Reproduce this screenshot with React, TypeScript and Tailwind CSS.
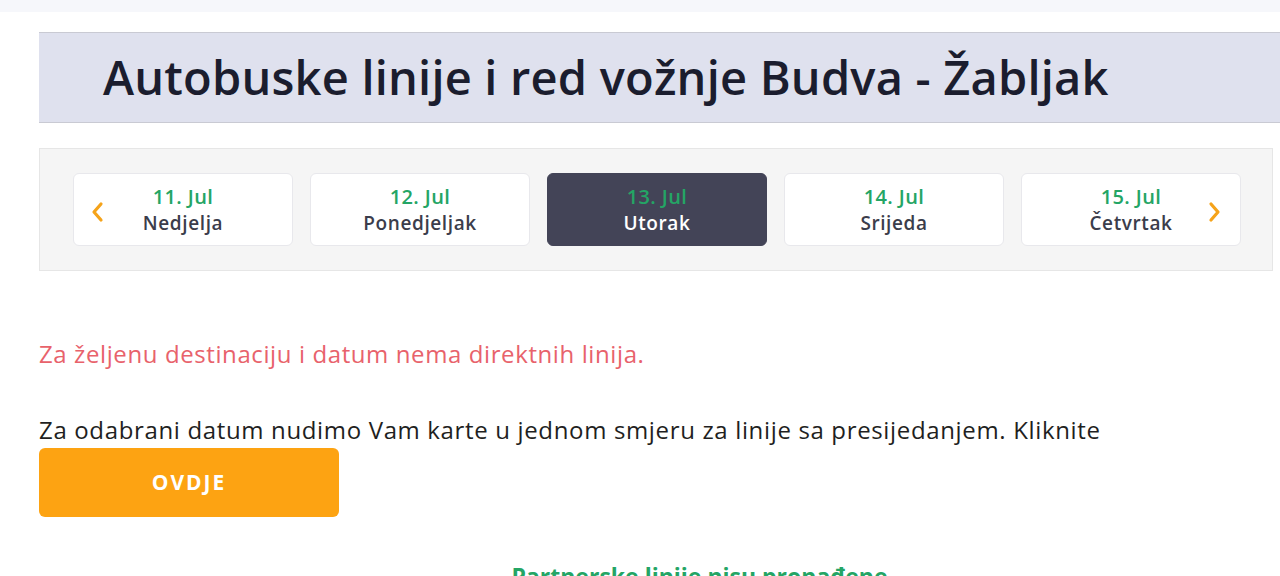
import React from "react";

const days = [
  { date: "11. Jul", name: "Nedjelja", left: true },
  { date: "12. Jul", name: "Ponedjeljak" },
  { date: "13. Jul", name: "Utorak", active: true },
  { date: "14. Jul", name: "Srijeda" },
  { date: "15. Jul", name: "Četvrtak", right: true },
];

function Chevron({ dir }: { dir: "left" | "right" }) {
  return (
    <svg width="14" height="22" viewBox="0 0 14 22" className="shrink-0">
      <path
        d={dir === "left" ? "M11 3 L4 11 L11 19" : "M3 3 L10 11 L3 19"}
        fill="none"
        stroke="#f5a31a"
        strokeWidth="3.2"
        strokeLinecap="round"
        strokeLinejoin="round"
      />
    </svg>
  );
}

export default function App() {
  return (
    <div className="min-h-[576px] w-[1280px] overflow-hidden bg-white" style={{ fontFamily: "'Open Sans', 'Noto Sans', sans-serif" }}>
      <div className="h-[12px] bg-[#f6f7fb]" />
      <div className="w-[1360px] pl-[39px] pt-[20px]">
        <div className="flex h-[91px] items-center border-y border-[#c9cad3] bg-[#dfe1ee] pl-[64px]">
          <h1 className="text-[47px] font-semibold leading-none tracking-[0.2px] text-[#1b1d2e]">
            Autobuske linije i red vožnje Budva - Žabljak
          </h1>
        </div>
        <div className="mt-[25px] flex w-[1234px] gap-[17px] border border-[#e6e6e6] bg-[#f5f5f5] py-[24px] pl-[33px] pr-[29px]">
          {days.map((d) => (
            <div
              key={d.date}
              className={`relative flex h-[73px] w-[220px] flex-col items-center justify-center rounded-[6px] border ${
                d.active ? "border-[#434457] bg-[#434457]" : "border-[#e8e8ec] bg-white"
              }`}
            >
              {d.left && (
                <div className="absolute left-[16px] top-[27px]">
                  <Chevron dir="left" />
                </div>
              )}
              {d.right && (
                <div className="absolute right-[18px] top-[27px]">
                  <Chevron dir="right" />
                </div>
              )}
              <div className="text-[20px] font-semibold leading-[26px] tracking-[0.4px] text-[#24a565]">{d.date}</div>
              <div className={`text-[19px] font-semibold leading-[26px] tracking-[0.6px] ${d.active ? "text-white" : "text-[#3b3d4b]"}`}>
                {d.name}
              </div>
            </div>
          ))}
        </div>
        <p className="mt-[68px] text-[24px] leading-[30px] tracking-[0.6px] text-[#e8626b]">
          Za željenu destinaciju i datum nema direktnih linija.
        </p>
        <p className="mt-[46px] text-[24px] leading-[30px] tracking-[0.65px] text-[#1f1f22]">
          Za odabrani datum nudimo Vam karte u jednom smjeru za linije sa presijedanjem. Kliknite
        </p>
        <button className="mt-[3px] flex h-[69px] w-[300px] items-center justify-center rounded-[6px] bg-[#fda312] text-[21px] font-bold tracking-[2px] text-white">
          OVDJE
        </button>
        <p className="mt-[44px] text-center text-[23px] font-bold leading-[30px] text-[#24a565]">
          Partnerske linije nisu pronađene
        </p>
      </div>
    </div>
  );
}
